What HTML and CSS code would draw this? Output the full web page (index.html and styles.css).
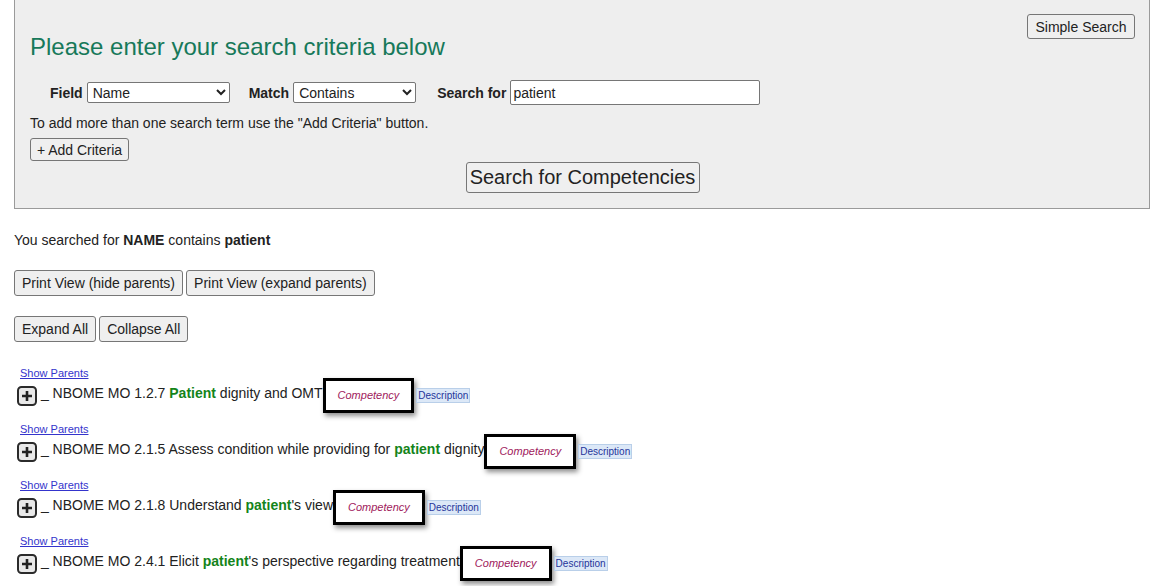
FILE: index.html
```html
<!DOCTYPE html>
<html>
<head>
<meta charset="utf-8">
<link rel="stylesheet" href="styles.css">
</head>
<body>
<div class="panel">
  <button class="btn simple">Simple Search</button>
  <h1 class="title">Please enter your search criteria below</h1>
  <div class="criteria">
    <label class="lbl">Field</label>
    <select class="sel sel-field"><option>Name</option></select>
    <label class="lbl lbl-gap">Match</label>
    <select class="sel sel-match"><option>Contains</option></select>
    <label class="lbl lbl-gap2">Search for</label>
    <input class="txt" type="text" value="patient">
  </div>
  <p class="note">To add more than one search term use the "Add Criteria" button.</p>
  <div class="addrow"><button class="btn add">+ Add Criteria</button></div>
  <div class="gorow"><button class="btn go">Search for Competencies</button></div>
</div>

<p class="searched">You searched for <b>NAME</b> contains <b>patient</b></p>

<div class="btnrow first"><button class="btn tall">Print View (hide parents)</button> <button class="btn tall">Print View (expand parents)</button></div>
<div class="btnrow second"><button class="btn tall">Expand All</button> <button class="btn tall">Collapse All</button></div>

<div class="results">
  <div class="item">
    <a class="parents" href="#">Show Parents</a>
    <div class="row"><span class="plus"><svg width="20" height="20" viewBox="0 0 20 20"><rect x="1" y="1" width="18" height="18" rx="3.5" fill="#e9e9e9" stroke="#2b2b2b" stroke-width="2"/><path d="M10 5v10M5 10h10" stroke="#222" stroke-width="2.6"/></svg></span> _ NBOME MO 1.2.7 <b class="hit">Patient</b> dignity and OMT<span class="comp">Competency</span><span class="desc">Description</span></div>
  </div>
  <div class="item">
    <a class="parents" href="#">Show Parents</a>
    <div class="row"><span class="plus"><svg width="20" height="20" viewBox="0 0 20 20"><rect x="1" y="1" width="18" height="18" rx="3.5" fill="#e9e9e9" stroke="#2b2b2b" stroke-width="2"/><path d="M10 5v10M5 10h10" stroke="#222" stroke-width="2.6"/></svg></span> _ NBOME MO 2.1.5 Assess condition while providing for <b class="hit">patient</b> dignity<span class="comp">Competency</span><span class="desc">Description</span></div>
  </div>
  <div class="item">
    <a class="parents" href="#">Show Parents</a>
    <div class="row"><span class="plus"><svg width="20" height="20" viewBox="0 0 20 20"><rect x="1" y="1" width="18" height="18" rx="3.5" fill="#e9e9e9" stroke="#2b2b2b" stroke-width="2"/><path d="M10 5v10M5 10h10" stroke="#222" stroke-width="2.6"/></svg></span> _ NBOME MO 2.1.8 Understand <b class="hit">patient</b>'s view<span class="comp">Competency</span><span class="desc">Description</span></div>
  </div>
  <div class="item">
    <a class="parents" href="#">Show Parents</a>
    <div class="row"><span class="plus"><svg width="20" height="20" viewBox="0 0 20 20"><rect x="1" y="1" width="18" height="18" rx="3.5" fill="#e9e9e9" stroke="#2b2b2b" stroke-width="2"/><path d="M10 5v10M5 10h10" stroke="#222" stroke-width="2.6"/></svg></span> _ NBOME MO 2.4.1 Elicit <b class="hit">patient</b>'s perspective regarding treatment<span class="comp">Competency</span><span class="desc">Description</span></div>
  </div>
</div>
</body>
</html>
```

FILE: styles.css
```css
html, body {
  margin: 0;
  padding: 0;
  background: #fff;
}
body {
  padding: 0 14px;
  font-family: "Liberation Sans", Arial, sans-serif;
  font-size: 14px;
  color: #222;
  overflow: hidden;
}
.panel {
  background: #eeeeee;
  border: 1px solid #9a9a9a;
  border-top: 0;
  padding: 14px 14px 15px 15px;
}
.btn {
  font-family: "Liberation Sans", Arial, sans-serif;
  font-size: 14px;
  color: #222;
  background: #efefef;
  border: 1px solid #767676;
  border-radius: 3px;
  padding: 0 7px;
  margin: 0;
  box-sizing: border-box;
}
.simple {
  float: right;
  height: 25px;
  width: 108px;
  padding: 0;
}
.title {
  margin: 19px 0 0 0;
  font-size: 24px;
  line-height: 28px;
  font-weight: normal;
  color: #17795a;
}
.criteria {
  margin-top: 19px;
  height: 25px;
  display: flex;
  align-items: center;
  padding-left: 20px;
}
.lbl {
  font-weight: bold;
  color: #222;
  margin-right: 4px;
}
.lbl-gap { margin-left: 19px; }
.lbl-gap2 { margin-left: 21px; }
.sel {
  height: 21px;
  font-family: "Liberation Sans", Arial, sans-serif;
  font-size: 14px;
  color: #222;
  background: #fff;
  border: 1px solid #767676;
  border-radius: 2px;
  padding: 0 0 0 1px;
  margin: 0;
  box-sizing: border-box;
}
.sel-field { width: 143px; }
.sel-match { width: 123px; }
.txt {
  width: 250px;
  height: 25px;
  box-sizing: border-box;
  border: 1px solid #767676;
  border-radius: 2px;
  padding: 1px 2px;
  margin: 0;
  font-family: "Liberation Sans", Arial, sans-serif;
  font-size: 14px;
  color: #222;
}
.note {
  margin: 10px 0 0 0;
  line-height: 16px;
}
.addrow {
  margin-top: 7px;
  height: 23px;
}
.add {
  height: 23px;
  width: 99px;
  padding: 0;
}
.gorow {
  margin-top: 1px;
  text-align: center;
  height: 31px;
}
.go {
  height: 31px;
  width: 234px;
  padding: 0;
  font-size: 20px;
}
.searched {
  margin: 23px 0 0 0;
  line-height: 16px;
}
.btnrow {
  height: 26px;
  font-size: 0;
}
.btnrow .btn { margin-right: 3px; }
.btnrow.first { margin-top: 22px; }
.btnrow.second { margin-top: 20px; }
.tall {
  height: 26px;
  padding: 0 7px;
}
.results {
  margin-top: 25px;
}
.item {
  height: 56px;
}
.parents {
  display: block;
  margin-left: 6px;
  font-size: 11px;
  line-height: 13px;
  color: #3434cc;
  text-decoration: underline;
}
.row {
  margin-left: 3px;
  margin-top: -6px;
  height: 38px;
  line-height: 38px;
  white-space: nowrap;
}
.plus {
  display: inline-block;
  width: 20px;
  height: 20px;
  vertical-align: middle;
  margin-top: 4px;
}
.plus svg { display: block; }
.hit {
  color: #14841a;
}
.comp {
  display: inline-block;
  vertical-align: middle;
  margin-top: 3px;
  line-height: 13px;
  border: 3px solid #000;
  padding: 8px 12px;
  background: #fff;
  font-size: 11px;
  font-style: italic;
  color: #a01a5c;
  box-shadow: 2px 3px 5px rgba(0,0,0,0.45);
}
.desc {
  display: inline-block;
  vertical-align: middle;
  margin-left: 2px;
  margin-top: 2px;
  line-height: 13px;
  font-size: 10px;
  padding: 0 1px;
  border: 1px solid #b9cfe9;
  background: #dce8f7;
  color: #25359a;
}
```
